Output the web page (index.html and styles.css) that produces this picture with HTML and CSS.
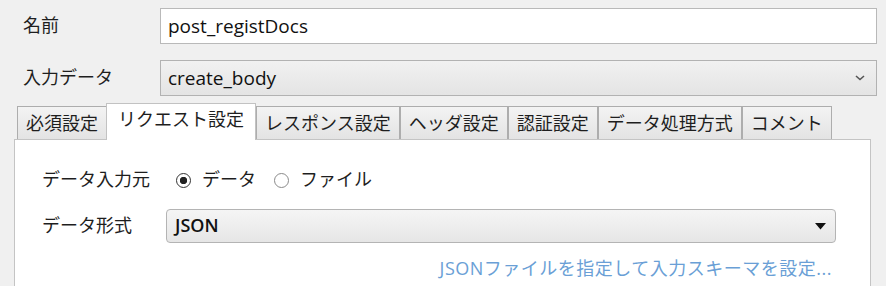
FILE: index.html
```html
<!DOCTYPE html>
<html lang="ja">
<head>
<meta charset="UTF-8" />
<link rel="stylesheet" href="styles.css">
</head>
<body>

<div class="row">
  <label class="row-label">名前</label>
  <input class="text-field" type="text" value="post_registDocs" />
</div>

<div class="row">
  <label class="row-label">入力データ</label>
  <div class="combo">
    <span class="combo-text">create_body</span>
    <svg class="chevron" width="10" height="6" viewBox="0 0 10 6">
      <polyline points="1,1 5,4.5 9,1" fill="none" stroke="#555" stroke-width="1.6" />
    </svg>
  </div>
</div>

<div class="tab-pane">
  <ul class="tabs">
    <li class="tab">必須設定</li>
    <li class="tab active">リクエスト設定</li>
    <li class="tab">レスポンス設定</li>
    <li class="tab">ヘッダ設定</li>
    <li class="tab">認証設定</li>
    <li class="tab">データ処理方式</li>
    <li class="tab">コメント</li>
  </ul>

  <div class="panel">
    <div class="panel-row">
      <span class="panel-label">データ入力元</span>
      <span class="radio checked"></span>
      <span class="radio-text">データ</span>
      <span class="radio"></span>
      <span class="radio-text">ファイル</span>
    </div>

    <div class="panel-row second">
      <span class="panel-label">データ形式</span>
      <div class="choice">
        <span class="choice-text">JSON</span>
        <svg class="arrow" width="11" height="7" viewBox="0 0 11 7">
          <polygon points="0,0 11,0 5.5,6.5" fill="#111" />
        </svg>
      </div>
    </div>

    <p class="schema-link"><a href="#">JSONファイルを指定して入力スキーマを設定...</a></p>
  </div>
</div>

</body>
</html>
```

FILE: styles.css
```css
@charset "utf-8";

body {
    margin: 0;
    padding-top: 8px;
    background: #f0f0f0;
    color: #1e1e1e;
    font-family: "Open Sans", "Noto Sans CJK JP", sans-serif;
    font-size: 18px;
    line-height: 1.2;
    overflow: hidden;
}

.row {
    display: flex;
    align-items: center;
    height: 36px;
    margin: 0 9px 16px 23px;
}

.row-label {
    width: 137px;
}

.text-field {
    flex: 1;
    box-sizing: border-box;
    height: 36px;
    margin: 0;
    padding: 0 7px;
    border: 1px solid #b9b9b9;
    background: #fff;
    color: #111;
    font-family: "Open Sans", sans-serif;
    font-size: 19px;
    outline: none;
}

.combo {
    flex: 1;
    display: flex;
    align-items: center;
    justify-content: space-between;
    box-sizing: border-box;
    height: 36px;
    padding: 0 11px 0 7px;
    border: 1px solid #b2b2b2;
    background: linear-gradient(#f1f1f1, #e4e4e4);
}

.combo-text {
    font-size: 19px;
    color: #111;
}

/* tabs */

.tab-pane {
    margin: -9px 15px 0 14px;
}

.tabs {
    display: flex;
    align-items: flex-end;
    height: 36px;
    margin: 0;
    padding: 0 0 0 3px;
    list-style: none;
}

.tab {
    height: 33px;
    line-height: 32px;
    padding: 0 8px;
    border: 1px solid #adadad;
    border-bottom: 0;
    box-sizing: border-box;
    background: linear-gradient(#f3f3f3, #e3e3e3);
    white-space: nowrap;
}

.tab.active {
    position: relative;
    height: 37px;
    margin: 0 0 -1px -1px;
    padding: 0 11px 5px;
    line-height: 31px;
    border-color: #c2c2c2;
    background: #fff;
}

.panel {
    height: 123px;
    padding: 23px 34px 0 27px;
    border: 1px solid #c4c4c4;
    border-bottom: 0;
    background: #fff;
}

.panel-row {
    display: flex;
    align-items: center;
    height: 34px;
}

.panel-row.second {
    margin-top: 12px;
}

.panel-label {
    width: 124px;
}

.radio {
    box-sizing: border-box;
    width: 15px;
    height: 15px;
    margin-left: 10px;
    border: 1px solid #8a8a8a;
    border-radius: 50%;
    background: #fff;
}

.radio + .radio-text + .radio {
    margin-left: 18px;
}

.radio.checked {
    border-color: #333;
    background: radial-gradient(circle, #222 0 3.4px, #fff 4px);
}

.radio-text {
    margin-left: 11px;
}

.choice {
    flex: 1;
    display: flex;
    align-items: center;
    justify-content: space-between;
    box-sizing: border-box;
    height: 34px;
    padding: 0 9px 0 8px;
    border: 1px solid #b4b4b4;
    border-radius: 4px;
    background: linear-gradient(#f5f5f5, #e6e6e6);
}

.choice-text {
    font-weight: 600;
    color: #111;
}

.schema-link {
    margin: 15px 4px 0 0;
    text-align: right;
}

.schema-link a {
    color: #6a9fd6;
    letter-spacing: 0.5px;
    text-decoration: none;
}
```
